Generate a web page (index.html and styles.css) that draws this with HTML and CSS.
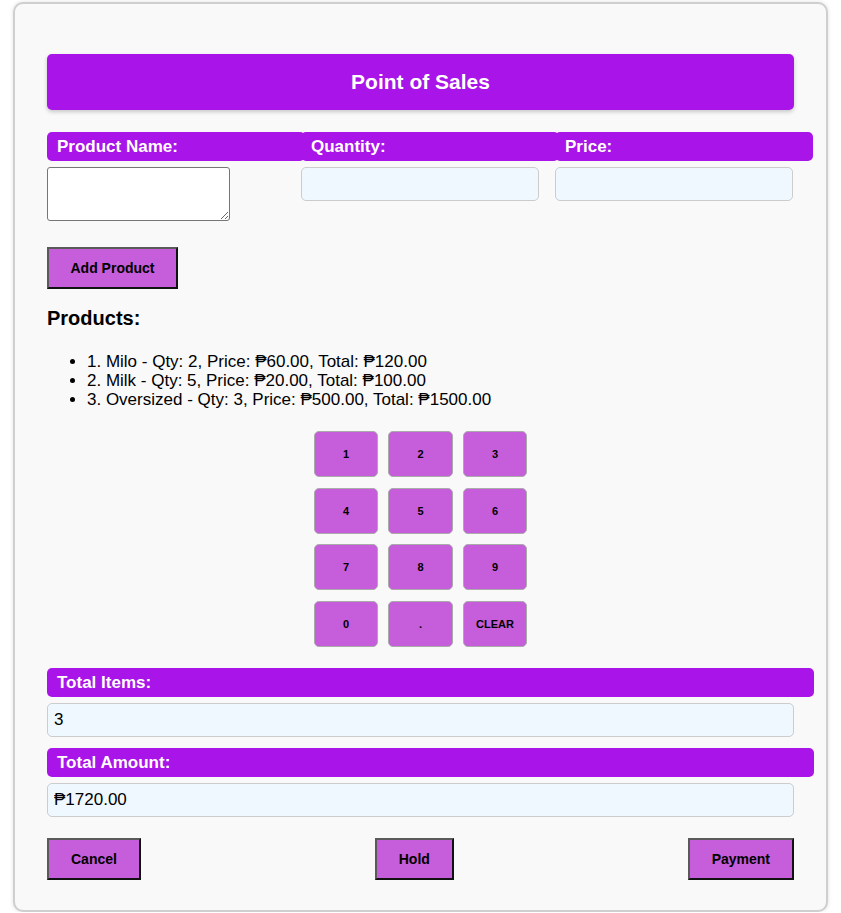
FILE: index.html
```html
<!DOCTYPE html>
<html lang="en">
<head>
<meta charset="utf-8">
<title>Point of Sales</title>
<link rel="stylesheet" href="styles.css">
</head>
<body>
<div class="pos">
  <h1 class="title">Point of Sales</h1>

  <div class="fields">
    <div class="field">
      <label class="lbl">Product Name:</label>
      <textarea class="name-input"></textarea>
    </div>
    <div class="field">
      <label class="lbl">Quantity:</label>
      <input class="inp" type="text">
    </div>
    <div class="field">
      <label class="lbl">Price:</label>
      <input class="inp" type="text">
    </div>
  </div>

  <button class="btn add-btn">Add Product</button>

  <h3 class="products-title">Products:</h3>
  <ul class="products">
    <li>1. Milo - Qty: 2, Price: ₱60.00, Total: ₱120.00</li>
    <li>2. Milk - Qty: 5, Price: ₱20.00, Total: ₱100.00</li>
    <li>3. Oversized - Qty: 3, Price: ₱500.00, Total: ₱1500.00</li>
  </ul>

  <div class="keypad">
    <button class="key">1</button>
    <button class="key">2</button>
    <button class="key">3</button>
    <button class="key">4</button>
    <button class="key">5</button>
    <button class="key">6</button>
    <button class="key">7</button>
    <button class="key">8</button>
    <button class="key">9</button>
    <button class="key">0</button>
    <button class="key">.</button>
    <button class="key">CLEAR</button>
  </div>

  <label class="lbl wide">Total Items:</label>
  <input class="inp full" type="text" value="3">

  <label class="lbl wide second">Total Amount:</label>
  <input class="inp full" type="text" value="₱1720.00">

  <div class="actions">
    <button class="btn">Cancel</button>
    <button class="btn">Hold</button>
    <button class="btn">Payment</button>
  </div>
</div>
</body>
</html>
```

FILE: styles.css
```css
html, body {
  margin: 0;
  padding: 0;
  background: #ffffff;
}

body {
  font-family: "Liberation Sans", Arial, sans-serif;
  color: #000;
}

.pos {
  box-sizing: border-box;
  width: 815px;
  margin: 2px auto 0;
  padding: 50px 32px 30px 32px;
  background: #f9f9f9;
  border: 2px solid #cfcfcf;
  border-radius: 10px;
  box-shadow: 0 0 4px rgba(0, 0, 0, 0.12);
}

.title {
  margin: 0;
  height: 56px;
  width: 747px;
  display: flex;
  align-items: center;
  justify-content: center;
  background: #a914e9;
  color: #fff;
  font-size: 21px;
  font-weight: bold;
  border-radius: 5px;
  box-shadow: 0 2px 4px rgba(0, 0, 0, 0.2);
}

.fields {
  margin-top: 22px;
  display: grid;
  grid-template-columns: 238px 238px 238px;
  column-gap: 16px;
  align-items: start;
}

.field {
  display: flex;
  flex-direction: column;
  align-items: flex-start;
}

.lbl {
  display: block;
  box-sizing: content-box;
  width: 100%;
  padding: 5px 10px;
  line-height: 19px;
  background: #a914e9;
  color: #fff;
  font-size: 17px;
  font-weight: bold;
  border-radius: 5px;
}

.field .lbl {
  width: 238px;
}

.name-input {
  box-sizing: border-box;
  margin-top: 6px;
  width: 183px;
  height: 54px;
  border: 1px solid #767676;
  border-radius: 3px;
  background: #fff;
  font-family: "Liberation Mono", monospace;
  font-size: 13px;
  padding: 2px;
}

.inp {
  box-sizing: border-box;
  display: block;
  margin-top: 6px;
  width: 238px;
  height: 34px;
  padding: 0 6px;
  border: 1px solid #cccccc;
  border-radius: 5px;
  background: #f0f8ff;
  font-family: "Liberation Sans", Arial, sans-serif;
  font-size: 17px;
  color: #000;
}

.inp.full {
  width: 747px;
}

.btn {
  box-sizing: border-box;
  height: 42px;
  padding: 0 22px;
  background: #c65ddb;
  border-style: solid;
  border-width: 2px;
  border-color: #5a5a5a #111 #111 #5a5a5a;
  font-family: "Liberation Sans", Arial, sans-serif;
  font-size: 14px;
  font-weight: bold;
  color: #000;
}

.add-btn {
  display: block;
  margin-top: 26px;
  width: 131px;
  padding: 0;
}

.products-title {
  margin: 18px 0 0;
  font-size: 20px;
  line-height: 23px;
  font-weight: bold;
}

.products {
  margin: 22px 0 0;
  padding-left: 40px;
  font-size: 17px;
  line-height: 19px;
}

.keypad {
  margin: 22px auto 0;
  display: grid;
  grid-template-columns: repeat(3, 64.5px);
  grid-auto-rows: 46px;
  column-gap: 10px;
  row-gap: 10.6px;
  justify-content: center;
}

.key {
  box-sizing: border-box;
  background: #c65ddb;
  border: 1px solid #aaaaaa;
  border-radius: 5px;
  font-family: "Liberation Sans", Arial, sans-serif;
  font-size: 11px;
  font-weight: bold;
  color: #000;
  padding: 0;
}

.lbl.wide {
  width: 747px;
  margin-top: 21px;
}

.lbl.second {
  margin-top: 11px;
}

.actions {
  margin-top: 21px;
  display: flex;
  justify-content: space-between;
  align-items: center;
}
```
